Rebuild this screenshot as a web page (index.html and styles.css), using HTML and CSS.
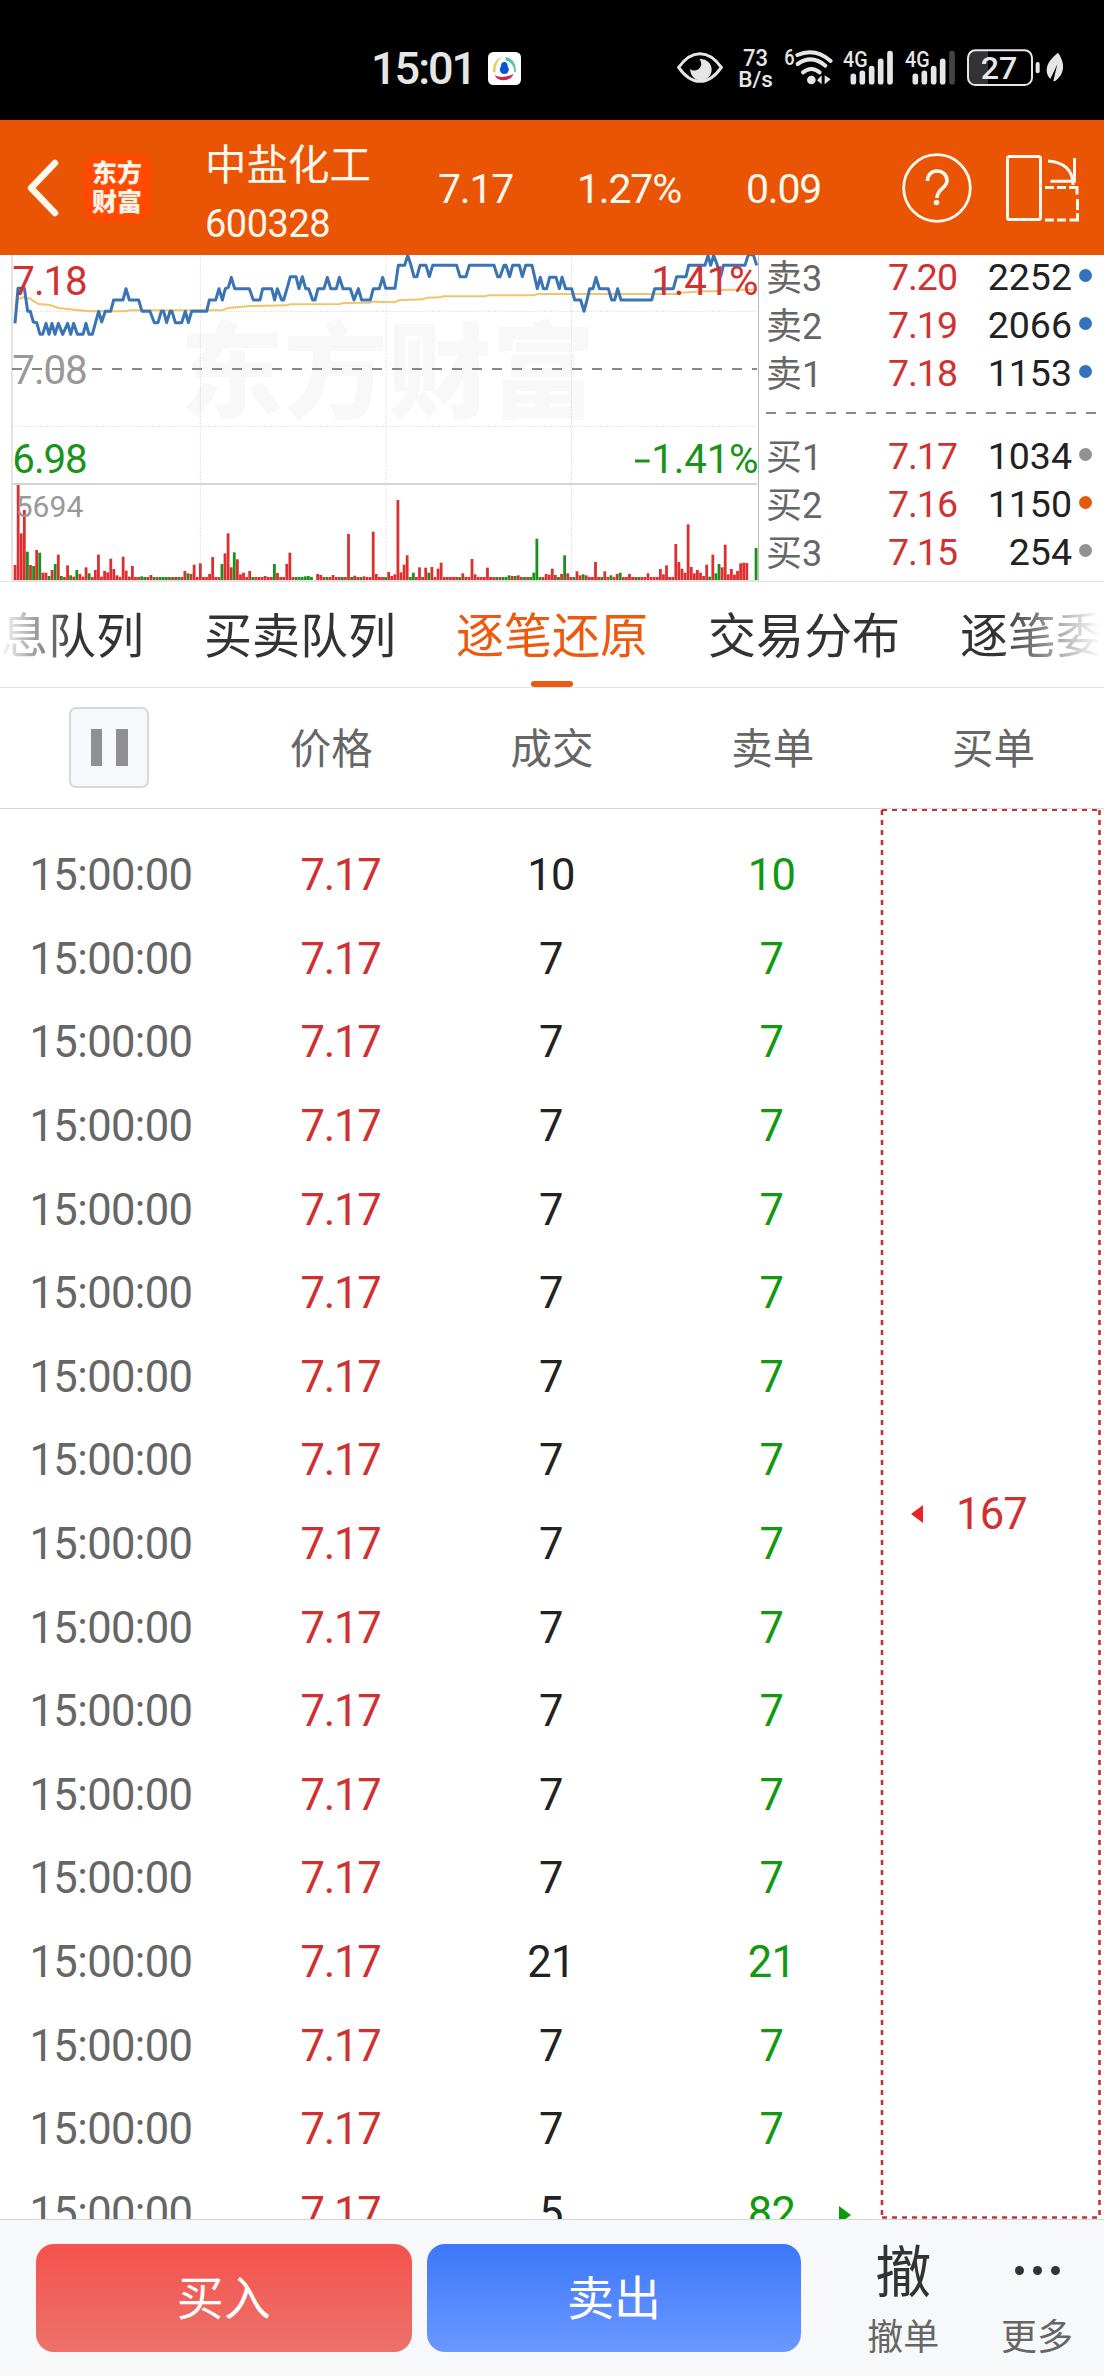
FILE: index.html
```html
<!DOCTYPE html>
<html lang="zh-CN">
<head>
  <meta charset="UTF-8" />
  <meta name="viewport" content="width=device-width, initial-scale=1.0" />
  <title>中盐化工 600328</title>
  <link rel="stylesheet" href="styles.css">
</head>
<body>
  <div class="status-bar">
    <span class="clock">15:01</span>
    <svg class="status-app" viewBox="0 0 99 99">
      <rect width="99" height="99" rx="16" fill="#fff"/>
      <path d="M46 15C24 18 13 36 15 61h8c-1-22 6-38 23-46z" fill="#e8cf62"/>
      <path d="M53 15c20 3 32 21 31 46h-5C78 41 70 30 53 25z" fill="#55c4a8"/>
      <path d="M20 70c16 8 36 7 56-5-1 9-14 20-28 20-14 0-24-6-28-15z" fill="#cf2457"/>
      <path d="M49 30c7 0 10 5 10 13 4 6 5 12 2 15-1 5-5 8-12 8s-11-3-12-8c-3-3-2-9 2-15 0-8 3-13 10-13z" fill="#0a54d6"/>
    </svg>
    <svg class="status-icons" viewBox="0 0 1332 240">
      <g fill="none" stroke="#e6e6e6" stroke-width="9">
        <path d="M56 112Q85 71 120 71T184 112Q155 154 120 154T56 112Z"/>
      </g>
      <path d="M122 87a32 32 0 1 1-31 29q6 8 17 5 14-4 16-18 0-10-6-15z" fill="#e6e6e6"/>
      <g fill="#e6e6e6">
        <text x="249" y="108" font-size="70" textLength="75" lengthAdjust="spacingAndGlyphs" class="bold">73</text>
        <text x="235" y="171" font-size="68" textLength="104" lengthAdjust="spacingAndGlyphs" class="bold">B/s</text>
        <text x="373" y="105" font-size="64" textLength="31" lengthAdjust="spacingAndGlyphs" class="bold">6</text>
        <text x="549" y="110" font-size="66" textLength="74" lengthAdjust="spacingAndGlyphs" class="bold">4G</text>
        <text x="735" y="110" font-size="66" textLength="74" lengthAdjust="spacingAndGlyphs" class="bold">4G</text>
        <circle cx="454" cy="150" r="13"/>
        <path d="M485 136v27l-14-12zM494 163v-27l18 12z"/>
      </g>
      <g fill="none" stroke="#e6e6e6" stroke-width="12" stroke-linecap="round">
        <path d="M412 75Q465 52 512 93M413 102Q455 72 496 107M429 127Q454 107 479 127"/>
      </g>
      <g stroke="#e6e6e6" stroke-width="17" stroke-linecap="round">
        <path d="M580 139v16M607 130v25M635 116v39M662 94v61M690 71v84"/>
        <path d="M766 139v16M793 130v25M821 116v39M848 94v61"/>
        <path d="M876 71v84" stroke="#444"/>
      </g>
      <path d="M944 63h40v99h-40q-18 0-18-18V81q0-18 18-18z" fill="#333"/>
      <rect x="924" y="61" width="192" height="104" rx="22" fill="none" stroke="#e6e6e6" stroke-width="6"/>
      <rect x="1127" y="96" width="12" height="34" rx="6" fill="#e6e6e6"/>
      <text x="962" y="147" font-size="96" textLength="110" lengthAdjust="spacingAndGlyphs" class="bold" fill="#e6e6e6">27</text>
      <path d="M1194 68c20 28 24 62-10 86l-4-1 12-50-21 44c-20-22-13-52 23-79z" fill="#e6e6e6"/>
    </svg>
  </div>

  <header class="header">
    <svg class="back" viewBox="0 0 32 58"><path d="M28 4L4 29l24 25" fill="none" stroke="#fff8ee" stroke-width="6.500" stroke-linecap="round" stroke-linejoin="round"/></svg>
    <div class="logo">东方<br>财富</div>
    <div class="stock">
      <div class="stock-name">中盐化工</div>
      <div class="stock-code">600328</div>
    </div>
    <div class="quote">
      <span class="q-price">7.17</span>
      <span class="q-rate">1.27%</span>
      <span class="q-diff">0.09</span>
    </div>
    <svg class="help" viewBox="0 0 70 70">
      <circle cx="35" cy="35" r="33.3" fill="none" stroke="#fff8ee" stroke-width="2.800"/>
      <path d="M25.500 28c0-6 4-10 9.500-10s10 4 10 9.500c0 8-10 8-10 17.500" fill="none" stroke="#fff8ee" stroke-width="3.600"/>
      <circle cx="34.500" cy="49.500" r="2.800" fill="#fff8ee"/>
    </svg>
    <svg class="rotate" viewBox="0 0 74 70" fill="none" stroke="#fff8ee" stroke-width="3">
      <rect x="2.500" y="3.500" width="33" height="63" rx="2"/>
      <path d="M43 8q25 2 25 24M69.500 5v24.500M45.500 28.200H71"/>
      <path d="M40 34.500h9M52 34.500h9M64 34.500h8v7M72.500 46v11M72.500 60v7h-8M40 67h9M52 67h9"/>
    </svg>
  </header>

  <section class="market">
    <svg class="chart" viewBox="0 15 2274 978">
      <text class="watermark" x="540" y="480" font-size="312" textLength="1246" lengthAdjust="spacingAndGlyphs">东方财富</text>
      <g fill="none" stroke="#d4d4d4" stroke-width="3" stroke-dasharray="3 4">
        <path d="M36 184H2270M36 529H2270M601 15V990M1158 15V990M1714 15V990"/>
      </g>
      <path d="M36 15V990" stroke="#dedede" stroke-width="5"/>
      <path d="M36 702H2271" stroke="#d4d4d4" stroke-width="6"/>
      <path d="M36 991H2271" stroke="#dedede" stroke-width="3"/>
      <path d="M36 357H2271" stroke="#888" stroke-width="6" stroke-dasharray="30 30"/>
      <g id="volume"></g>
      <polyline fill="none" stroke="#efc56c" stroke-width="6" points="45,218 54,148 70,142 90,146 115,162 150,165 175,174 230,180 270,184 375,184 390,181 665,181 685,174 750,168 860,166 870,163 1020,162 1030,159 1110,158 1120,155 1185,157 1195,151 1270,148 1280,143 1320,142 1330,139 1455,139 1465,136 1600,136 1615,132 2030,132 2045,128 2110,124 2145,124 2175,119 2270,119"/>
      <polyline fill="none" stroke="#3a74b5" stroke-width="9" stroke-linejoin="round" points="45,220 54,115 73,115 83,184 91,184 100,216 110,218 120,253 128,253 138,220 147,253 156,220 165,253 175,220 188,253 203,220 212,253 221,220 232,253 249,253 258,220 267,253 277,253 286,220 296,184 305,216 316,184 332,184 341,150 369,150 378,116 388,150 416,150 426,184 450,184 463,218 474,218 484,184 491,184 500,218 510,184 516,184 526,218 545,218 556,184 565,218 575,184 620,184 628,150 647,150 657,116 667,150 676,116 685,112 694,82 704,116 748,116 760,150 780,150 788,116 815,116 824,150 832,116 845,150 851,150 862,112 871,80 888,80 897,116 907,80 917,116 926,116 938,150 945,150 954,116 972,116 982,82 992,116 1009,116 1018,82 1029,116 1051,116 1062,150 1075,116 1085,150 1111,150 1120,116 1138,116 1148,82 1157,115 1185,115 1195,46 1214,46 1223,16 1233,46 1242,80 1251,80 1260,46 1278,46 1288,80 1298,46 1370,46 1380,80 1398,80 1408,46 1482,46 1493,80 1500,80 1512,46 1518,46 1529,80 1538,46 1558,46 1567,80 1577,46 1596,46 1612,116 1621,82 1630,116 1640,116 1649,82 1668,82 1678,116 1686,82 1697,116 1715,116 1724,150 1742,150 1752,184 1761,150 1769,116 1779,116 1788,82 1798,116 1825,116 1835,150 1844,150 1853,116 1863,150 1955,150 1964,116 2020,116 2030,80 2058,80 2066,46 2115,46 2124,16 2132,46 2141,16 2152,46 2162,80 2170,46 2235,46 2245,14 2260,14 2270,46"/>
      <g font-size="121">
        <text x="37" y="135" textLength="226" class="f-red">7.18</text>
        <text x="37" y="403" textLength="226" class="f-grey">7.08</text>
        <text x="37" y="669" textLength="226" class="f-green">6.98</text>
        <text x="1954" y="135" textLength="322" class="f-red">1.41%</text>
        <text x="1954" y="669" textLength="322" class="f-green">1.41%</text>
        <path d="M1905 633h44" stroke="#199319" stroke-width="9"/>
      </g>
      <text x="47" y="800" font-size="90" textLength="203" class="f-grey">5694</text>
    </svg>
    <div class="book">
      <div class="book-side">
        <div class="level"><span>卖3</span><b>7.20</b><em>2252</em><i class="dot blue"></i></div>
        <div class="level"><span>卖2</span><b>7.19</b><em>2066</em><i class="dot blue"></i></div>
        <div class="level"><span>卖1</span><b>7.18</b><em>1153</em><i class="dot blue"></i></div>
      </div>
      <div class="book-divider"></div>
      <div class="book-side">
        <div class="level"><span>买1</span><b>7.17</b><em>1034</em><i class="dot"></i></div>
        <div class="level"><span>买2</span><b>7.16</b><em>1150</em><i class="dot orange"></i></div>
        <div class="level"><span>买3</span><b>7.15</b><em>254</em><i class="dot"></i></div>
      </div>
    </div>
  </section>

  <nav class="tabs">
    <div class="tabs-inner">
      <span>息队列</span>
      <span>买卖队列</span>
      <span class="active">逐笔还原</span>
      <span>交易分布</span>
      <span>逐笔委</span>
    </div>
  </nav>

  <div class="columns">
    <div><button class="pause" aria-label="pause"><i></i><i></i></button></div>
    <div>价格</div>
    <div>成交</div>
    <div>卖单</div>
    <div>买单</div>
  </div>

  <main class="ticks">
    <div class="tick-list" id="ticks"></div>
    <div class="buy-order">
      <svg class="buy-frame" viewBox="0 0 224 1410" fill="none" stroke="#c23434">
        <path d="M2 1H220" stroke-width="2" stroke-dasharray="5 5"/>
        <path d="M2 1V1408M219.500 1V1408" stroke-width="2.600" stroke-dasharray="5 5"/>
        <path d="M2 1408.500H220" stroke-width="2.600" stroke-dasharray="5 5"/>
      </svg>
      <span class="arrow-left"></span>
      <span class="buy-qty">167</span>
    </div>
  </main>

  <footer class="footer">
    <button class="btn buy">买入</button>
    <button class="btn sell">卖出</button>
    <div class="action">
      <span class="action-icon">撤</span>
      <span class="action-label">撤单</span>
    </div>
    <div class="action more">
      <span class="action-icon"><i></i><i></i><i></i></span>
      <span class="action-label">更多</span>
    </div>
  </footer>

  <script>
    // volume per minute: index, height, optional "g" for a falling minute
    const peaks = "0,45 1,285 2,140 3,210 4,85g 5,45 6,42g 7,90 8,82g 9,22 10,22 11,12g 12,30 13,48g 14,76 15,12g 17,44 18,14g 19,10 20,30g 21,18 22,10 23,38 24,20g 26,30 27,76 28,10 29,27 30,23 31,64 32,33 33,14 35,70 36,28 37,10 38,42 41,11g 42,9g 44,15 45,9g 47,9g 48,9g 49,9g 51,9g 53,9g 55,27 56,20g 57,18 58,46 60,50 63,18 64,69 67,48g 68,80 69,140 70,38 71,83g 72,62 73,17 74,22 76,27 77,9g 81,12 84,48g 85,21 88,48 89,82 91,9g 92,9g 93,9g 94,11g 95,12g 96,9g 97,0 98,18 99,15 101,9g 103,15 106,9g 108,138 109,9g 110,13 112,9g 113,11 116,145 117,18 120,9g 121,24 122,12 123,17 124,240 125,23 126,46 127,74 128,9g 129,22g 131,38 133,37 134,22g 135,39 137,34 138,52 144,9g 145,20 148,63 149,17 153,37 156,9g 158,9g 159,9g 160,14g 161,12 162,12g 163,14 165,9g 167,9g 168,22g 169,124g 170,9g 172,18 173,16 174,34 175,15 176,9g 177,18 178,74g 179,20 181,9g 182,26 183,14 184,17g 185,14 188,54 190,9g 191,26 193,14g 195,18 196,22g 199,18 202,9g 205,20 209,33 210,17 211,44 214,108 215,54 216,34 217,22 218,167 219,39 220,20 221,30 222,22 223,12 224,46 225,10g 226,76 227,20g 228,48g 229,38 230,106 231,17 232,33 233,16 234,27 235,50 236,52 237,51 238,0 239,0 240,96g";
    const minutes = Array.from({ length: 241 }, () => ({ h: 9, up: true }));
    peaks.split(" ").forEach(p => {
      const [i, v] = p.split(",");
      minutes[i] = { h: parseInt(v), up: !v.endsWith("g") };
    });
    document.getElementById("volume").innerHTML = minutes.map((m, i) =>
      `<rect x="${(41 + i * 9.2625).toFixed(1)}" y="${990 - m.h}" width="8.400" height="${m.h}" fill="${m.up ? "#dc3030" : "#1c901c"}"/>`
    ).join("");

    const ticks = [[10, 10]];
    for (let i = 0; i < 12; i++) ticks.push([7, 7]);
    ticks.push([21, 21], [7, 7], [7, 7], [5, 82]);
    document.getElementById("ticks").innerHTML = ticks.map(([vol, sell]) => `
      <div class="tick">
        <span class="time">15:00:00</span>
        <span class="price">7.17</span>
        <span class="vol">${vol}</span>
        <span class="sell-qty">${sell}</span>
        ${sell === 82 ? '<span class="arrow-right"></span>' : ""}
      </div>`).join("");
  </script>
</body>
</html>
```
FILE: styles.css
```css
* {
  box-sizing: border-box;
}
body {
  margin: 0;
  width: 1104px;
  height: 2376px;
  display: flex;
  flex-direction: column;
  overflow: hidden;
  background: #fff;
  color: #222;
  font-family: Roboto, "Noto Sans CJK SC", sans-serif;
}
svg {
  display: block;
  flex: none;
}
button {
  border: none;
  padding: 0;
  font-family: inherit;
}
.bold {
  font-weight: 500;
}

/* status bar */
.status-bar {
  flex: none;
  height: 120px;
  padding: 0 0 0 371px;
  display: flex;
  background: #000;
  color: #e6e6e6;
}
.clock {
  width: 117px;
  font-size: 45px;
  font-weight: 500;
  line-height: 138px;
  letter-spacing: -2px;
}
.status-app {
  width: 33px;
  height: 33px;
  margin-top: 52px;
}
.status-icons {
  width: 444px;
  height: 80px;
  margin: 30px 0 0 auto;
}

/* header */
.header {
  flex: none;
  height: 135px;
  display: flex;
  align-items: center;
  background: #e95504;
  color: #fff8ee;
}
.back {
  width: 32px;
  height: 58px;
  margin-left: 27px;
}
.logo {
  width: 68px;
  height: 68px;
  margin-left: 24px;
  padding-top: 5px;
  border-radius: 15px;
  background: #ff4a00;
  color: #fff4ea;
  font-size: 25px;
  font-weight: 900;
  line-height: 29px;
  text-align: center;
}
.stock {
  width: 233px;
  margin-left: 54px;
  padding-top: 8px;
}
.stock-name {
  font-size: 41.5px;
  line-height: 64px;
}
.stock-code {
  font-size: 38px;
  line-height: 52px;
  letter-spacing: -0.5px;
}
.quote {
  width: 464px;
  padding-top: 2px;
  display: flex;
  font-size: 41px;
  letter-spacing: -1.2px;
}
.q-price {
  width: 139px;
}
.q-rate {
  width: 169px;
}
.help {
  width: 70px;
  height: 70px;
}
.rotate {
  width: 74px;
  height: 70px;
  margin-left: 33px;
}

/* chart and order book */
.market {
  flex: none;
  height: 327px;
  display: flex;
  overflow: hidden;
  border-bottom: 1px solid #e2e2e2;
}
.chart {
  width: 758px;
  height: 326px;
}
.watermark {
  fill: #f8f8f8;
  font-weight: 900;
}
.f-red {
  fill: #d03232;
}
.f-grey {
  fill: #999;
}
.f-green {
  fill: #199319;
}
.book {
  flex: 1;
  margin-top: -2px;
  padding-left: 7px;
  border-left: 1px solid #bbb;
}
.level {
  height: 48px;
  display: flex;
  align-items: center;
  font-size: 37.5px;
}
.level span {
  width: 100px;
  margin-top: -4px;
  color: #666;
  font-size: 36px;
}
.level b {
  width: 91px;
  color: #d03232;
  font-weight: 400;
  letter-spacing: -1px;
  text-align: right;
}
.level em {
  width: 115px;
  font-style: normal;
  text-align: right;
}
.dot {
  width: 13px;
  height: 13px;
  margin: -4px 0 0 7px;
  border-radius: 50%;
  background: #919196;
}
.dot.blue {
  background: #3272be;
}
.dot.orange {
  background: #e5590d;
}
.book-divider {
  height: 2px;
  margin: 15px 7px 18px 0;
  background: repeating-linear-gradient(90deg, #888 0 10px, transparent 10px 20px);
}

/* tabs */
.tabs {
  flex: none;
  height: 106px;
  border-bottom: 1px solid #e2e2e2;
  overflow: hidden;
}
.tabs-inner {
  height: 106px;
  display: flex;
  gap: 60px;
  color: #333;
  font-size: 48px;
  line-height: 110px;
  white-space: nowrap;
  -webkit-mask-image: linear-gradient(90deg, transparent 0, #000 75px, #000 1000px, transparent 1100px);
  mask-image: linear-gradient(90deg, transparent 0, #000 75px, #000 1000px, transparent 1100px);
}
.tabs .active {
  position: relative;
  color: #ee590f;
}
.tabs .active::after {
  content: "";
  position: absolute;
  left: 75px;
  top: 99px;
  width: 42px;
  height: 6px;
  border-radius: 3px;
  background: #ee590f;
}

/* column titles */
.columns {
  flex: none;
  height: 121px;
  display: grid;
  grid-template-columns: repeat(5, 1fr);
  border-bottom: 1px solid #d8d8d8;
  color: #666;
  font-size: 41.5px;
  line-height: 123px;
  text-align: center;
}
.pause {
  width: 80px;
  height: 81px;
  margin: 19px 0 0 69px;
  display: flex;
  justify-content: center;
  align-items: center;
  gap: 14px;
  border: 2px solid #d6dadf;
  border-radius: 7px;
  background: #f6f8fc;
}
.pause i {
  width: 11.5px;
  height: 37px;
  background: #8f8f94;
}

/* tick rows */
.ticks {
  flex: 1;
  min-height: 0;
  display: flex;
  overflow: hidden;
}
.tick-list {
  width: 880px;
  padding-top: 25px;
}
.tick {
  height: 83.6px;
  display: flex;
  align-items: center;
  font-size: 43.5px;
  letter-spacing: -0.6px;
  text-align: center;
}
.time {
  width: 222px;
  color: #666;
}
.price {
  width: 237px;
  color: #d03030;
  letter-spacing: -1.2px;
}
.vol {
  width: 184px;
}
.sell-qty {
  width: 257px;
  margin-right: -61px;
  color: #119911;
}
.arrow-right {
  margin-top: 3px;
  border: 9px solid transparent;
  border-left: 12px solid #0a9c0a;
  border-right: 0;
}
.buy-order {
  position: relative;
  width: 224px;
  height: 1410px;
  padding-left: 30px;
  display: flex;
  align-items: center;
}
.buy-frame {
  position: absolute;
  left: 0;
  top: 0;
  width: 224px;
  height: 1410px;
}
.arrow-left {
  margin-left: 1px;
  border: 9px solid transparent;
  border-right: 12px solid #e82424;
  border-left: 0;
}
.buy-qty {
  margin-left: 33px;
  color: #d03030;
  font-size: 43.5px;
  letter-spacing: -0.8px;
}

/* bottom bar */
.footer {
  flex: none;
  height: 157px;
  padding: 24px 0 0 36px;
  display: flex;
  border-top: 1px solid #d2d5d8;
  background: #f6f8fa;
}
.btn {
  width: 376px;
  height: 108px;
  padding-bottom: 7px;
  border-radius: 18px;
  color: #fff;
  font-size: 47px;
}
.buy {
  background: linear-gradient(#f4524c, #ec726b);
}
.sell {
  width: 375px;
  margin-left: 15px;
  background: linear-gradient(#3c78f9, #6b98ff);
}
.action {
  width: 134px;
  margin-left: 35px;
  display: flex;
  flex-direction: column;
  align-items: center;
  color: #333;
}
.action.more {
  margin-left: 0;
}
.action-icon {
  height: 66px;
  margin-top: -4px;
  display: flex;
  align-items: center;
  gap: 9px;
  font-size: 56px;
  line-height: 66px;
}
.action-icon i {
  width: 9px;
  height: 9px;
  margin-top: -5px;
  border-radius: 50%;
  background: #333;
}
.action-label {
  color: #666;
  font-size: 36px;
  line-height: 64px;
}
```
